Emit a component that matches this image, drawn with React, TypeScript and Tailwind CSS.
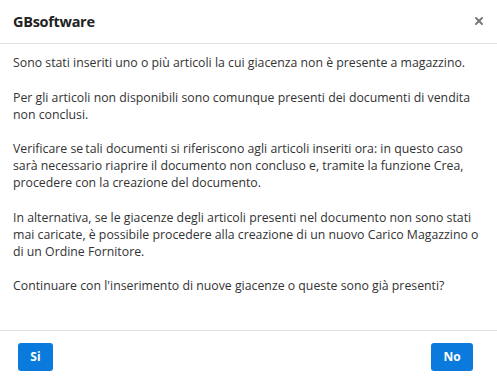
import { X } from "lucide-react";

const paragraphs = [
  "Sono stati inseriti uno o più articoli la cui giacenza non è presente a magazzino.",
  "Per gli articoli non disponibili sono comunque presenti dei documenti di vendita non conclusi.",
  "Verificare se\u2009tali documenti si riferiscono agli articoli inseriti ora: in questo caso sarà necessario riaprire il documento non concluso e, tramite la funzione Crea, procedere con la creazione del documento.",
  "In alternativa, se le giacenze degli articoli presenti nel documento non sono stati mai caricate, è possibile procedere alla creazione di un nuovo Carico Magazzino o di un Ordine Fornitore.",
  "Continuare con l'inserimento di nuove giacenze o queste sono già presenti?",
];

export default function App() {
  return (
    <div
      className="flex h-[385px] w-[497px] flex-col bg-white text-[#212529]"
      style={{ fontFamily: '"Open Sans", "Noto Sans", sans-serif' }}
    >
      <div className="flex h-[44px] items-center justify-between border-b border-[#dee2e6] pr-[12px] pl-[13px]">
        <h1 className="text-[14.5px] font-bold tracking-[-0.3px] text-[#222]">GBsoftware</h1>
        <button type="button" aria-label="Chiudi" className="pb-[2px] text-[#7a7a7a]">
          <X size={12} strokeWidth={4} />
        </button>
      </div>

      <div className="flex flex-1 flex-col gap-[17.5px] border-b border-[#dee2e6] px-[13px] pt-[10px] text-[12.3px] leading-[17px] text-[#333]">
        {paragraphs.map((p) => (
          <p key={p}>{p}</p>
        ))}
      </div>

      <div className="flex h-[54px] items-center justify-between px-[18px] pb-[2px]">
        <button
          type="button"
          className="h-[28px] w-[35px] rounded-[3px] bg-[#0a7bdc] text-[12px] font-bold text-white"
        >
          Si
        </button>
        <button
          type="button"
          className="mr-[6px] h-[28px] w-[42px] rounded-[3px] bg-[#0a7bdc] text-[12px] font-bold text-white"
        >
          No
        </button>
      </div>
    </div>
  );
}
